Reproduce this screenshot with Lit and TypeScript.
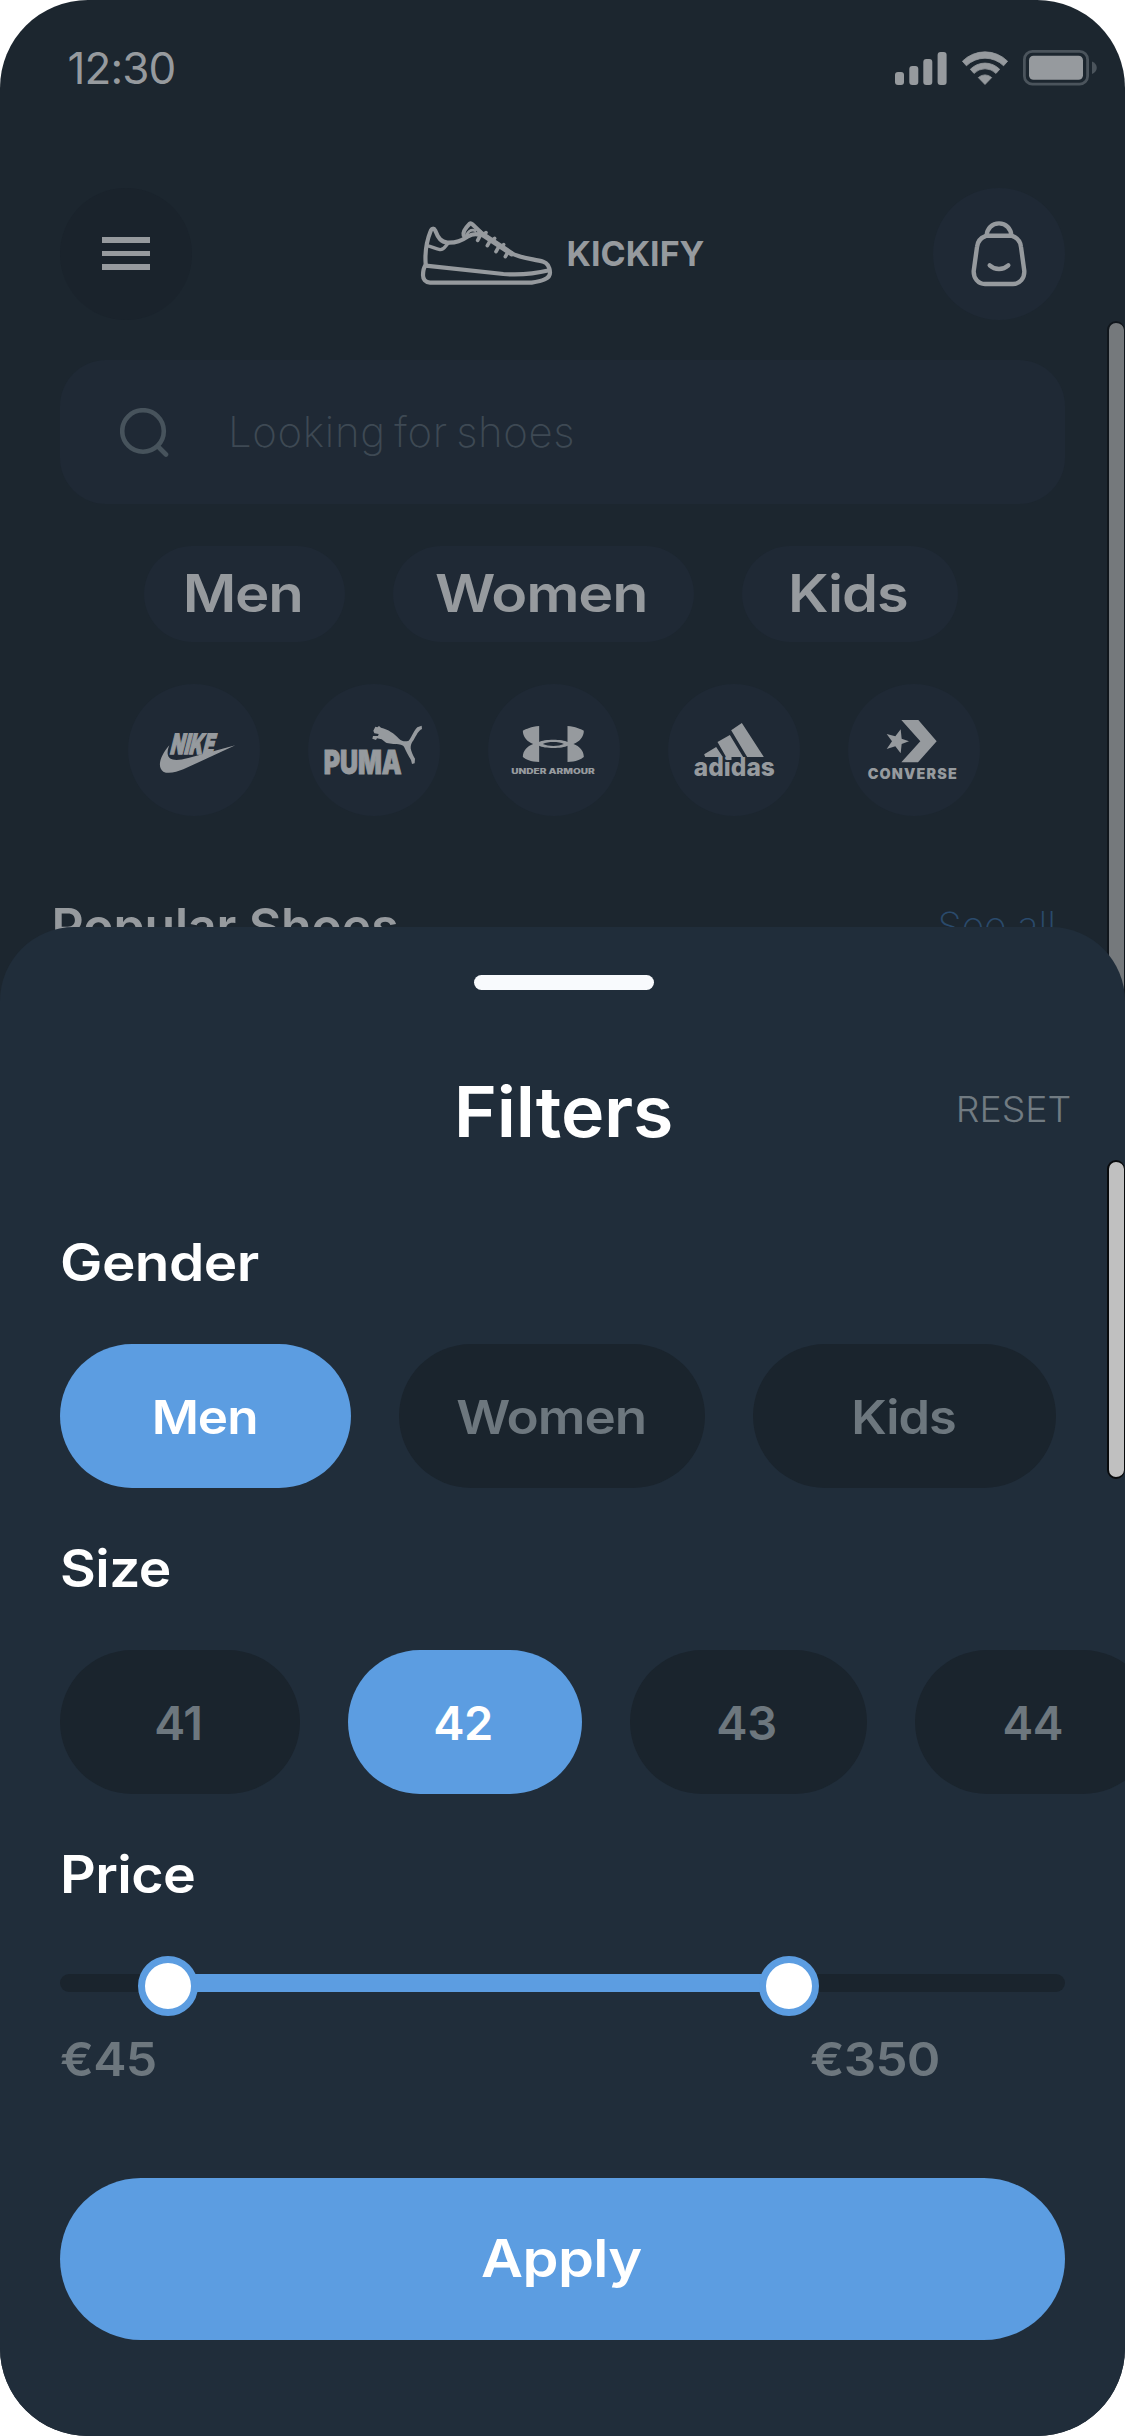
import { LitElement, html, svg, css, nothing } from "lit";
import { customElement, property, state } from "lit/decorators.js";
import { classMap } from "lit/directives/class-map.js";

interface Label {
  text: string;
  stretch: number;
}

@customElement("wide-text")
class WideText extends LitElement {
  @property({ type: Number }) stretch = 1;
  static styles = css`
    :host {
      display: inline-block;
      white-space: nowrap;
    }
    .glyphs {
      display: inline-block;
      transform-origin: var(--origin, center) center;
    }
  `;
  render() {
    return html`<span class="glyphs" style="transform: scaleX(${this.stretch})"><slot></slot></span>`;
  }
}

@customElement("status-bar")
class StatusBar extends LitElement {
  static styles = css`
    :host {
      display: flex;
      align-items: center;
      justify-content: space-between;
      height: 136px;
      padding: 0 28px 0 67.5px;
      color: #969a9e;
    }
    .time {
      font-size: 44px;
      line-height: 60px;
      letter-spacing: -0.9px;
    }
    .icons {
      display: flex;
      align-items: center;
      gap: 15px;
    }
    svg {
      display: block;
      fill: currentColor;
    }
  `;
  render() {
    return html`
      <span class="time">12:30</span>
      <div class="icons">
        <svg width="52" height="34" viewBox="0 0 52 34">
          <rect x="0" y="21" width="9" height="13" rx="3"></rect>
          <rect x="14.3" y="15" width="9" height="19" rx="3"></rect>
          <rect x="28.3" y="8" width="9" height="26" rx="3"></rect>
          <rect x="42.6" y="1" width="9" height="33" rx="3"></rect>
        </svg>
        <svg width="46" height="34" viewBox="0 0 46 34">
          <path d="M.4 10.2A32 32 0 0 1 45.6 10.2L41.6 14.8A26.6 26.6 0 0 0 4.4 14.8Z" stroke="currentColor" stroke-width=".8" stroke-linejoin="round"></path>
          <path d="M8.3 18.3A20.5 20.5 0 0 1 37.7 18.3L34 22.4A15.4 15.4 0 0 0 12 22.4Z" stroke="currentColor" stroke-width=".8" stroke-linejoin="round"></path>
          <path d="M16.3 26.6A9.6 9.6 0 0 1 29.7 26.6L23 33.5Z" stroke="currentColor" stroke-width=".8" stroke-linejoin="round"></path>
        </svg>
        <svg width="74" height="36" viewBox="0 0 74 36">
          <rect x="1.4" y="1.4" width="63.2" height="32.8" rx="8" fill="none" stroke="#4b545c" stroke-width="2.8"></rect>
          <rect x="6" y="5.8" width="54" height="24" rx="4.5"></rect>
          <path d="M69 11.5C71.8 12.5 73.8 15 73.8 17.8S71.8 23 69 24.1Z" fill="#4b545c"></path>
        </svg>
      </div>
    `;
  }
}

@customElement("brand-logo")
class BrandLogo extends LitElement {
  @property() brand = "";
  static styles = css`
    :host {
      display: block;
      width: 132px;
      height: 132px;
      border-radius: 50%;
      background: #1f2935;
      color: #969a9e;
    }
    svg {
      display: block;
      width: 132px;
      height: 132px;
      fill: currentColor;
      font-family: Inter, "Liberation Sans", sans-serif;
    }
    .heavy {
      font-weight: 900;
    }
    .bold {
      font-weight: 800;
    }
  `;

  private viewBoxes: Record<string, string> = {
    nike: "24 12 396 396",
    puma: "564 12 396 396",
    "under-armour": "52.5 12 396 396",
    adidas: "592.5 12 396 396",
    converse: "84 12 396 396",
  };

  private art(brand: string) {
    switch (brand) {
      case "nike":
        return svg`
          <text class="heavy" transform="translate(148 221) skewX(-14)" font-size="84" textLength="131" lengthAdjust="spacingAndGlyphs" stroke="currentColor" stroke-width="4">NIKE</text>
          <path d="M148 196C119 230 111 262 130 275C145 283 170 276 190 268L346 196L205 234C165 245 145 240 143 222C142 213 145 204 148 196Z"></path>`;
      case "puma":
        return svg`
          <text class="heavy" x="611" y="282" font-size="98" textLength="234" lengthAdjust="spacingAndGlyphs" stroke="currentColor" stroke-width="3">PUMA</text>
          <path d="M760 152L766 140L772 142L777 138L783 143C805 148 822 160 837 176C846 184 856 185 866 182C876 172 880 153 892 142L905 137L906 147C895 152 889 166 881 180C874 188 872 195 872 205C874 215 878 225 885 236L884 250L876 252L873 240C864 225 858 213 852 200C845 192 835 193 820 192L800 189C795 187 790 182 785 178L771 175L768 180L757 176L759 168L774 168L776 162L763 160Z"></path>`;
      case "under-armour":
        return svg`
          <path fill-rule="evenodd" d="M206 138C182 140 167 147 157 152C157 170 170 185 188 192C170 199 157 212 157 231C165 238 180 245 206 246L206 197C220 206 277 206 291 197L291 246C317 245 332 238 340 231C340 212 327 199 309 192C327 185 340 170 340 152C330 147 315 140 291 138L291 186C277 177 220 177 206 186ZM217 192C233 184 264 184 280 192C264 200 233 200 217 192Z"></path>
          <text class="heavy" x="122" y="282" font-size="21" textLength="251" lengthAdjust="spacingAndGlyphs">UNDER ARMOUR</text>`;
      case "adidas":
        return svg`
          <path d="M782 151L814 129L880 231L830 231ZM741 186L778 165L818 231L783 231L783 240L772 240ZM701 223L737 201L757 231L704 231Z"></path>
          <text class="bold" x="670" y="287" font-size="76" textLength="243" lengthAdjust="spacingAndGlyphs">adidas</text>`;
      case "converse":
        return svg`
          <path d="M244 120H295L350 184L294 247H244L301 184ZM267 184L245 176L242 148L226 169L200 162L216 184L200 207L226 199L242 220L245 192Z"></path>
          <text class="heavy" x="143" y="297" font-size="43" textLength="267" lengthAdjust="spacing">CONVERSE</text>`;
      default:
        return nothing;
    }
  }

  render() {
    return html`<svg viewBox=${this.viewBoxes[this.brand] ?? "0 0 396 396"}>${this.art(this.brand)}</svg>`;
  }
}

@customElement("shop-page")
class ShopPage extends LitElement {
  private categories: Label[] = [
    { text: "Men", stretch: 1.118 },
    { text: "Women", stretch: 1.14 },
    { text: "Kids", stretch: 1.11 },
  ];
  private brands = ["nike", "puma", "under-armour", "adidas", "converse"];

  static styles = css`
    :host {
      display: block;
    }
    svg {
      display: block;
    }
    .header {
      display: flex;
      align-items: center;
      justify-content: space-between;
      padding: 51.5px 60px 0;
    }
    .round {
      display: grid;
      place-items: center;
      width: 132px;
      height: 132px;
      border-radius: 50%;
      background: #1f2935;
    }
    .round.menu {
      background: #1a232c;
    }
    .menu-lines {
      display: grid;
      gap: 7.6px;
      width: 47.5px;
    }
    .menu-lines i {
      height: 5.8px;
      background: #969a9e;
    }
    .logo {
      display: flex;
      align-items: center;
      gap: 13px;
      font-size: 34px;
      font-weight: 700;
      line-height: 66px;
    }
    .shoe {
      margin: -2px 1px 0 -1px;
    }
    .search {
      display: flex;
      align-items: center;
      gap: 60px;
      height: 144px;
      margin: 40.5px 60px 0;
      padding-left: 60px;
      box-sizing: border-box;
      border-radius: 46px;
      background: #1f2935;
    }
    .placeholder {
      margin: -2px 0 0 -1px;
      color: #3e4954;
      font-size: 42px;
      font-weight: 150;
      letter-spacing: 0.65px;
      word-spacing: -4px;
    }
    .categories {
      display: grid;
      grid-template-columns: 201px 301px 216px;
      gap: 48px;
      padding: 42px 0 0 144px;
    }
    .category {
      display: grid;
      place-items: center;
      height: 96px;
      padding: 0 4px 2px 0;
      box-sizing: border-box;
      border-radius: 48px;
      background: #1f2935;
      font-size: 52px;
      font-weight: 575;
      letter-spacing: -0.02em;
    }
    .brands {
      display: flex;
      gap: 48px;
      padding: 42px 0 0 127.5px;
    }
    .section {
      display: flex;
      align-items: center;
      justify-content: space-between;
      padding: 80px 69px 0 51.5px;
      line-height: 60px;
    }
    .title {
      font-size: 50px;
      font-weight: 570;
      letter-spacing: -0.15px;
    }
    .more {
      color: #2a4a6c;
      font-size: 39px;
      font-weight: 180;
    }
  `;

  render() {
    return html`
      <div class="header">
        <div class="round menu"><div class="menu-lines"><i></i><i></i><i></i></div></div>
        <div class="logo">
          <svg class="shoe" width="133" height="66" viewBox="60 60 399 198" fill="none" stroke="currentColor" stroke-width="12.5" stroke-linejoin="round" stroke-linecap="round">
            <path d="M77 192C75 165 79 125 92 93C95 84 102 84 106 92C115 115 123 126 142 128C170 129 184 122 202 110C214 103 226 100 238 104"></path>
            <path d="M191 106C187 94 198 82 209 71C212 69 214 70 217 73L242 97"></path>
            <path d="M199 106C205 94 215 88 226 92" stroke-width="8"></path>
            <path d="M240 98L335 161" stroke-width="16"></path>
            <path d="M258 98L250 106M284 115L276 122M311 134L302 141" stroke-width="11"></path>
            <path d="M242 104L233 121M271 121L262 137M297 139L288 155M324 156L316 170" stroke-width="11"></path>
            <path d="M335 160C362 174 400 177 430 185C446 190 449 203 450 217C451 236 428 243 395 248H90C76 247 69 238 69 226C69 210 71 203 77 195"></path>
            <path d="M77 197L310 222C360 226 410 220 448 211"></path>
            <path d="M81 137C95 140 106 146 120 149C132 150 136 138 145 129" stroke-width="10"></path>
          </svg>
          <span>KICKIFY</span>
        </div>
        <div class="round">
          <svg width="56" height="66" viewBox="0 0 56 66" fill="none" stroke="currentColor" stroke-width="4.4" stroke-linecap="round">
            <path d="M15 14.8H41C46 16.5 49.4 20 50 26L53.3 50C53.6 57 49 63 42 63H14C7 63 2.4 57 2.7 50L6 26C6.6 20 10 16.5 15 14.8Z"></path>
            <path d="M15.6 14.6C16 7.5 21 2.4 28 2.4S40 7.5 40.4 14.6"></path>
            <path d="M18.7 44.3C24 49.2 32 49.2 37.3 44.3"></path>
          </svg>
        </div>
      </div>
      <div class="search">
        <svg width="49" height="49" viewBox="0 0 49 49" fill="none" stroke="#47535c" stroke-width="4.6" stroke-linecap="round">
          <circle cx="23" cy="23" r="20.8"></circle>
          <path d="M38 38.5L46 46.5"></path>
        </svg>
        <span class="placeholder">Looking for shoes</span>
      </div>
      <div class="categories">
        ${this.categories.map(
          (c) => html`<div class="category"><wide-text .stretch=${c.stretch}>${c.text}</wide-text></div>`
        )}
      </div>
      <div class="brands">
        ${this.brands.map((b) => html`<brand-logo .brand=${b}></brand-logo>`)}
      </div>
      <div class="section">
        <span class="title">Popular Shoes</span>
        <span class="more">See all</span>
      </div>
    `;
  }
}

@customElement("filter-sheet")
class FilterSheet extends LitElement {
  @state() private gender = "Men";
  @state() private size = "42";

  private genders: Label[] = [
    { text: "Men", stretch: 1.09 },
    { text: "Women", stretch: 1.128 },
    { text: "Kids", stretch: 1.075 },
  ];
  private sizes: Label[] = [
    { text: "41", stretch: 0.99 },
    { text: "42", stretch: 1 },
    { text: "43", stretch: 1 },
    { text: "44", stretch: 0.98 },
  ];
  private range = { from: 10.75, to: 72.54 };

  static styles = css`
    :host {
      display: flex;
      flex-direction: column;
      box-sizing: border-box;
      padding: 48px 60px 0;
      border-radius: 74px 74px 0 0;
      background: #202d3a;
      color: #fff;
      overflow: hidden;
    }
    .handle {
      align-self: center;
      width: 180px;
      height: 15px;
      margin-left: 3px;
      border-radius: 7.5px;
      background: #f8fafd;
    }
    .top {
      display: grid;
      grid-template-columns: 1fr auto 1fr;
      align-items: center;
      height: 72px;
      margin: 85.5px -6px 84.5px -3px;
    }
    .heading {
      grid-column: 2;
      font-size: 70px;
      font-weight: 590;
      line-height: 72px;
      letter-spacing: -0.003em;
    }
    .reset {
      --origin: right;
      justify-self: end;
      margin-bottom: 5px;
      color: #717b82;
      font-size: 35px;
      font-weight: 340;
    }
    .group {
      display: flex;
      flex-direction: column;
      gap: 52px;
      margin-bottom: 50px;
    }
    .name {
      --origin: left;
      margin: 1px 0 -1px -0.5px;
      font-size: 52px;
      font-weight: 580;
      line-height: 60px;
      letter-spacing: -0.01em;
    }
    .pills {
      display: grid;
      gap: 48px;
    }
    .genders {
      grid-template-columns: 291px 306px 303px;
    }
    .sizes {
      grid-template-columns: 240px 234px 237px 240px;
    }
    .pill {
      display: grid;
      place-items: center;
      height: 144px;
      padding: 2px 1px 0 0;
      border: 0;
      border-radius: 72px;
      background: #1a242d;
      color: #6d777e;
      font: 575 47px/60px Inter, "Liberation Sans", sans-serif;
      letter-spacing: -0.02em;
    }
    .sizes .pill {
      padding-right: 4px;
      font-weight: 600;
      letter-spacing: -0.01em;
    }
    .pill.selected {
      background: #5c9de1;
      color: #fff;
    }
    .slider {
      position: relative;
      height: 60px;
      padding-top: 18px;
      box-sizing: border-box;
    }
    .track {
      height: 18px;
      border-radius: 9px;
      background: #1a242d;
    }
    .fill {
      height: 18px;
      background: #5c9de1;
    }
    .thumb {
      position: absolute;
      top: 0;
      width: 60px;
      height: 60px;
      margin-left: -30px;
      box-sizing: border-box;
      border: 7.5px solid #5c9de1;
      border-radius: 50%;
      background: #fff;
    }
    .prices {
      --origin: left;
      display: grid;
      grid-template-columns: 750px auto;
      justify-content: start;
      margin-top: -36px;
      color: #6d777e;
      font-size: 47px;
      font-weight: 580;
      line-height: 54px;
      letter-spacing: -0.015em;
    }
    .apply {
      height: 162px;
      margin-top: 42px;
      padding: 0 2px 0 0;
      border: 0;
      border-radius: 81px;
      background: #5c9de1;
      color: #fff;
      font: 575 52px/60px Inter, "Liberation Sans", sans-serif;
      letter-spacing: -0.01em;
    }
  `;

  private pill(item: Label, selected: boolean, pick: () => void) {
    return html`<button class=${classMap({ pill: true, selected })} @click=${pick}>
      <wide-text .stretch=${item.stretch}>${item.text}</wide-text>
    </button>`;
  }

  render() {
    const { from, to } = this.range;
    return html`
      <div class="handle"></div>
      <div class="top">
        <wide-text class="heading" .stretch=${1.05}>Filters</wide-text>
        <wide-text class="reset" .stretch=${1.067}>RESET</wide-text>
      </div>
      <div class="group">
        <wide-text class="name" .stretch=${1.09}>Gender</wide-text>
        <div class="pills genders">
          ${this.genders.map((g) => this.pill(g, g.text === this.gender, () => (this.gender = g.text)))}
        </div>
      </div>
      <div class="group">
        <wide-text class="name" .stretch=${1.06}>Size</wide-text>
        <div class="pills sizes">
          ${this.sizes.map((s) => this.pill(s, s.text === this.size, () => (this.size = s.text)))}
        </div>
      </div>
      <div class="group">
        <wide-text class="name" .stretch=${1.068}>Price</wide-text>
        <div class="slider">
          <div class="track">
            <div class="fill" style="margin-left: ${from}%; width: ${to - from}%"></div>
          </div>
          <div class="thumb" style="left: ${from}%"></div>
          <div class="thumb" style="left: ${to}%"></div>
        </div>
        <div class="prices">
          <wide-text .stretch=${1.063}>€45</wide-text>
          <wide-text .stretch=${1.085}>€350</wide-text>
        </div>
      </div>
      <button class="apply"><wide-text .stretch=${1.11}>Apply</wide-text></button>
    `;
  }
}

@customElement("app-root")
class AppRoot extends LitElement {
  static styles = css`
    :host {
      display: block;
      background: #fff;
    }
    .screen {
      position: relative;
      width: 1125px;
      height: 2436px;
      overflow: hidden;
      border-radius: 88px;
      background: #1c262f;
      color: #969a9e;
      font-family: Inter, "Liberation Sans", sans-serif;
    }
    .sheet {
      position: absolute;
      inset: 927px 0 0;
    }
    .scrollbar {
      position: absolute;
      right: 0;
      width: 18px;
      box-sizing: border-box;
      border: 2px solid #10161c;
      border-right-width: 1px;
      border-radius: 9px;
    }
    .page-scroll {
      top: 321px;
      height: 720px;
      background: #75797c;
    }
    .sheet-scroll {
      top: 1160px;
      height: 319px;
      border-color: #080a0c;
      background: #c0c0c0;
    }
  `;
  render() {
    return html`
      <div class="screen">
        <status-bar></status-bar>
        <shop-page></shop-page>
        <div class="scrollbar page-scroll"></div>
        <filter-sheet class="sheet"></filter-sheet>
        <div class="scrollbar sheet-scroll"></div>
      </div>
    `;
  }
}
